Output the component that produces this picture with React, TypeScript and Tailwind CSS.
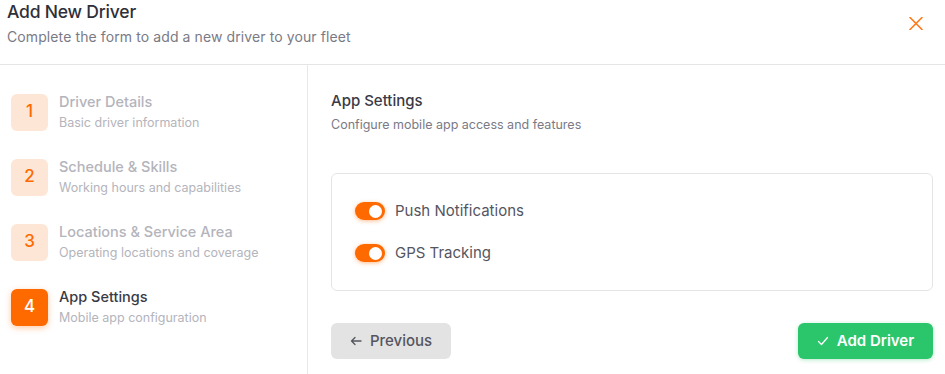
import React from "react";

const steps = [
  { n: 1, title: "Driver Details", sub: "Basic driver information" },
  { n: 2, title: "Schedule & Skills", sub: "Working hours and capabilities" },
  { n: 3, title: "Locations & Service Area", sub: "Operating locations and coverage" },
  { n: 4, title: "App Settings", sub: "Mobile app configuration", active: true },
];

function Toggle() {
  return (
    <div className="relative h-[18px] w-[30px] rounded-full bg-[#ff6a00] shadow-[0_1px_4px_rgba(255,106,0,0.45)]">
      <div className="absolute right-[3px] top-[2.5px] h-[13px] w-[13px] rounded-full bg-white" />
    </div>
  );
}

export default function App() {
  return (
    <div className="h-[374px] w-[945px] overflow-hidden bg-white font-['Inter',sans-serif]">
      <div className="flex h-[65px] items-start justify-between border-b border-[#e5e5e5] pl-[7px] pr-[22px]">
        <div>
          <div className="text-[17.5px] leading-[24px] font-medium text-[#2f2f3a] tracking-[-0.2px]">Add New Driver</div>
          <div className="mt-[4px] text-[14px] leading-[18px] text-[#7a7a85] tracking-[0.1px]">Complete the form to add a new driver to your fleet</div>
        </div>
        <svg className="mt-[17px]" width="14" height="13" viewBox="0 0 14 13" fill="none">
          <path d="M1 0.5 L13 12.5 M13 0.5 L1 12.5" stroke="#ff7a1a" strokeWidth="1.6" strokeLinecap="round" />
        </svg>
      </div>
      <div className="flex h-[309px]">
        <div className="flex w-[308px] flex-col gap-[27px] border-r border-[#e8e8e8] pl-[11px] pt-[28px]">
          {steps.map((s) => (
            <div key={s.n} className="flex h-[38px] items-center gap-[11px]">
              <div
                className={
                  s.active
                    ? "flex h-[37px] w-[37px] items-center justify-center rounded-[6px] bg-[#ff6a00] text-[17px] font-medium text-white shadow-[0_2px_6px_rgba(255,106,0,0.35)]"
                    : "flex h-[37px] w-[37px] items-center justify-center rounded-[6px] bg-[#fde6d6] text-[17px] font-medium text-[#ff6a00]"
                }
              >
                {s.n}
              </div>
              <div>
                <div className={s.active ? "text-[14.5px] leading-[20px] font-medium text-[#3a3a46]" : "text-[14.5px] leading-[20px] font-medium text-[#b4b4bc]"}>
                  {s.title}
                </div>
                <div className="mt-[2px] text-[12.5px] leading-[18px] text-[#b4b4bc]">{s.sub}</div>
              </div>
            </div>
          ))}
        </div>
        <div className="flex-1 pl-[23px] pr-[12px] pt-[26px]">
          <div className="text-[15px] leading-[20px] font-medium text-[#3a3a46]">App Settings</div>
          <div className="mt-[5px] text-[12.5px] leading-[18px] text-[#7a7a85]">Configure mobile app access and features</div>
          <div className="mt-[39px] flex flex-col gap-[18px] rounded-[6px] border border-[#e5e5e5] px-[23px] py-[25px]">
            <div className="flex h-[24px] items-center gap-[10px]">
              <Toggle />
              <span className="text-[15px] text-[#55555f]">Push Notifications</span>
            </div>
            <div className="flex h-[24px] items-center gap-[10px]">
              <Toggle />
              <span className="text-[15px] text-[#55555f]">GPS Tracking</span>
            </div>
          </div>
          <div className="mt-[32px] flex items-center justify-between">
            <button className="flex h-[36px] w-[120px] items-center justify-center gap-[8px] rounded-[6px] bg-[#e3e3e3] text-[15px] font-medium text-[#55555f]">
              <svg width="12" height="10" viewBox="0 0 12 10" fill="none">
                <path d="M11 5 H1.5 M5 1.5 L1.5 5 L5 8.5" stroke="#55555f" strokeWidth="1.3" strokeLinecap="round" strokeLinejoin="round" />
              </svg>
              Previous
            </button>
            <button className="flex h-[36px] w-[135px] items-center justify-center gap-[8px] rounded-[6px] bg-[#2bc66b] text-[15px] font-semibold text-white shadow-[0_1px_4px_rgba(43,198,107,0.35)]">
              <svg width="12" height="10" viewBox="0 0 12 10" fill="none">
                <path d="M1.5 5.5 L4.5 8.5 L10.5 1.5" stroke="white" strokeWidth="1.3" strokeLinecap="round" strokeLinejoin="round" />
              </svg>
              Add Driver
            </button>
          </div>
        </div>
      </div>
    </div>
  );
}
